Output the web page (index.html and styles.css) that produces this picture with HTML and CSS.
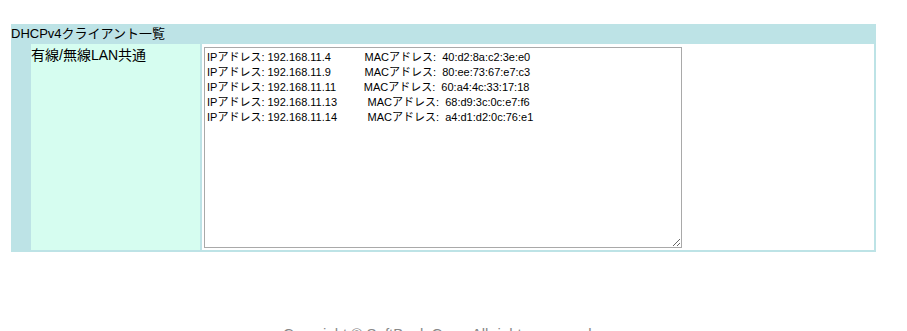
FILE: index.html
```html
<html lang="ja">

<head>
    <meta charset="UTF-8">
    <title>DHCPv4クライアント一覧</title>
    <link rel="stylesheet" href="styles.css">
</head>

<body>
    <div class="content">
        <table class="list-table">
            <tr>
                <td class="list-title" colspan="3">DHCPv4クライアント一覧</td>
            </tr>
            <tr>
                <td class="indent"></td>
                <td class="label">有線/無線LAN共通</td>
                <td class="value">
                    <textarea class="client-list" readonly>IPアドレス: 192.168.11.4           MACアドレス:  40:d2:8a:c2:3e:e0
IPアドレス: 192.168.11.9           MACアドレス:  80:ee:73:67:e7:c3
IPアドレス: 192.168.11.11         MACアドレス:  60:a4:4c:33:17:18
IPアドレス: 192.168.11.13          MACアドレス:  68:d9:3c:0c:e7:f6
IPアドレス: 192.168.11.14          MACアドレス:  a4:d1:d2:0c:76:e1</textarea>
                </td>
            </tr>
        </table>
    </div>

    <div class="footer">Copyright © SoftBank Corp. All rights reserved.</div>
</body>
</html>
```

FILE: styles.css
```css
body {
    margin: 0;
    background-color: #fff;
    font-family: 'Liberation Sans', 'Noto Sans CJK JP', sans-serif;
    font-size: 13px;
    color: #000;
}

.content {
    padding: 24px 31px 0 11px;
}

.list-table {
    width: 865px;
    border-spacing: 2px;
    background-color: #bde3e6;
    font-family: 'Liberation Sans', 'Noto Sans CJK JP', sans-serif;
    font-size: 13px;
}

.list-table td {
    padding: 0;
    vertical-align: top;
}

.list-title {
    height: 16px;
    line-height: 16px;
    position: relative;
    left: -2px;
}

.indent {
    width: 16px;
}

.label {
    width: 169px;
    padding-top: 3px !important;
    background-color: #d6fdf0;
    font-size: 14px;
    line-height: 17px;
}

.value {
    background-color: #fff;
}

.client-list {
    display: block;
    width: 478px;
    height: 201px;
    margin: 3px 0 2px 2px;
    padding: 2px 2px;
    border: 1px solid #a9a9a9;
    box-sizing: border-box;
    resize: both;
    font-family: 'Liberation Sans', 'Noto Sans CJK JP', sans-serif;
    font-size: 11px;
    line-height: 15px;
    color: #000;
    white-space: pre;
    overflow: hidden;
}

.footer {
    margin-top: 73px;
    padding-left: 283px;
    font-size: 15px;
    color: #888;
    white-space: nowrap;
}
```
